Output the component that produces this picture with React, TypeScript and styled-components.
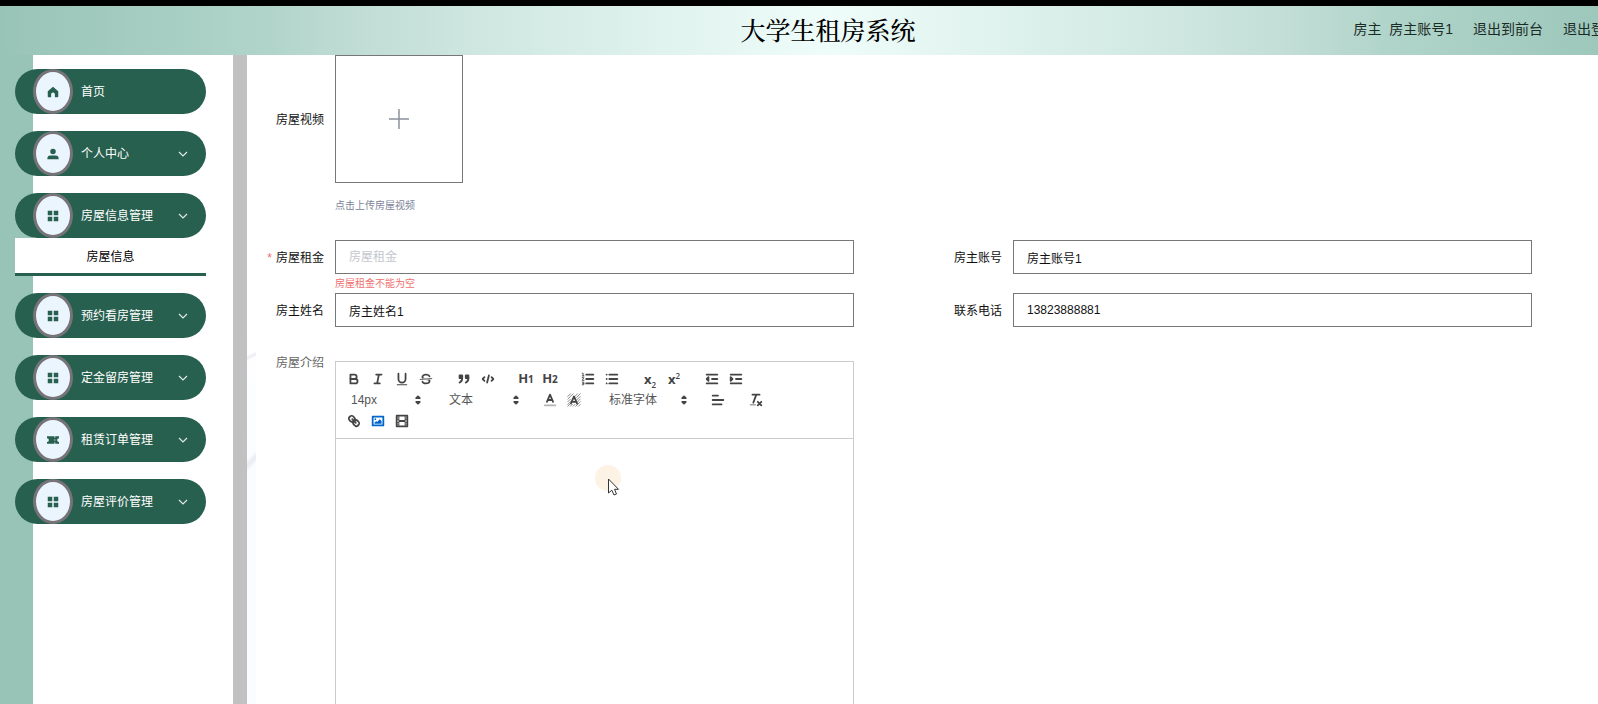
import React, { type ReactNode } from "react";
import styled, { createGlobalStyle } from "styled-components";

const green = "#28604f";
const mint = "#98c4b7";
const ink = "#444";

const GlobalStyle = createGlobalStyle`
  * { box-sizing: border-box; }
  html, body, #root { height: 100%; }
  body {
    margin: 0;
    overflow: hidden;
    background: #fff;
    color: #111;
    font: 12px/18px "Liberation Sans", "Noto Sans CJK SC", sans-serif;
  }
  button, input, select { font: inherit; color: inherit; }
  button { border: 0; padding: 0; background: none; cursor: pointer; }
`;

const Page = styled.div`
  display: flex;
  flex-direction: column;
  height: 100%;
  overflow: hidden;
  border-top: 6px solid #000;
`;

const Header = styled.header`
  flex: none;
  display: grid;
  grid-template-columns: 1fr auto 1fr;
  align-items: center;
  width: calc(100% + 58px);
  height: 49px;
  padding: 0 37px 3px;
  background: linear-gradient(90deg, ${mint} 0%, #b0d4c9 16%, #bfdcd4 21%, #cfe7e0 29%, #effdfa 50%, #cfe7e0 71%, #bfdcd4 79%, #b0d4c9 84%, ${mint} 100%);
`;

const Title = styled.h1`
  grid-column: 2;
  margin: 0;
  font: 500 25px/36px "Noto Serif CJK SC", "Noto Serif SC", "Liberation Serif", "Noto Sans CJK SC", serif;
  color: #000;
`;

const UserBar = styled.nav`
  display: flex;
  justify-content: flex-end;
  gap: 20px;
  font-size: 14px;
  line-height: 20px;
  color: #1b2b26;
  white-space: nowrap;

  a { color: inherit; text-decoration: none; }
`;

const Body = styled.div`
  flex: 1;
  display: flex;
  min-height: 0;
`;

const Sidebar = styled.aside`
  flex: none;
  width: 247px;
  padding: 14px 27px 0 15px;
  border-right: 14px solid #c1c1c1;
  background: linear-gradient(90deg, ${mint} 33px, #fff 33px);
`;

const Menu = styled.ul`
  display: flex;
  flex-direction: column;
  gap: 17px;
  margin: 0;
  padding: 0;
  list-style: none;
`;

const MenuButton = styled.button`
  display: flex;
  align-items: center;
  gap: 8px;
  width: 100%;
  height: 45px;
  padding: 0 18px;
  border-radius: 24px;
  background: ${green};
  color: #fff;
  text-align: left;
`;

const MenuText = styled.span`
  flex: 1;
`;

const IconDisc = styled.span`
  display: grid;
  place-items: center;
  width: 40px;
  height: 45px;
  border: 3px solid #777479;
  border-radius: 50%;
  background: #eaf5fe;
  color: ${green};
`;

const SubLink = styled.a`
  display: block;
  height: 38px;
  border-bottom: 3px solid ${green};
  background: #fff;
  color: #000;
  line-height: 38px;
  text-align: center;
  text-decoration: none;
`;

const Main = styled.main`
  flex: 1;
  min-width: 0;
  padding: 0 66px 0 9px;
  background:
    linear-gradient(155deg, transparent 35%, #ececf3 50%, transparent 65%) 0 293px / 9px 16px no-repeat,
    linear-gradient(135deg, transparent 30%, #e9ebf1 50%, transparent 70%) 0 394px / 9px 24px no-repeat,
    linear-gradient(#fff 270px, #fafcff 400px) 0 0 / 9px 100% no-repeat;
`;

const Form = styled.form`
  display: grid;
  grid-template-columns: 1fr 1fr;
  column-gap: 80px;
`;

const Field = styled.div<{ $wide?: boolean; $height: number }>`
  display: grid;
  grid-template-columns: 68px 1fr;
  column-gap: 11px;
  align-items: start;
  grid-column: ${(p) => (p.$wide ? "1 / -1" : "auto")};
  min-height: ${(p) => p.$height}px;
`;

const Label = styled.label<{ $line?: number; $muted?: boolean }>`
  line-height: ${(p) => p.$line ?? 36}px;
  color: ${(p) => (p.$muted ? "#666" : "#111")};
  text-align: right;
  white-space: nowrap;
`;

const Star = styled.span`
  margin-right: 4px;
  color: #f56c6c;
`;

const Input = styled.input`
  display: block;
  width: 100%;
  height: 34px;
  padding: 0 13px;
  border: 1px solid #777;
  border-radius: 0;
  background: #fff;
  outline: 0;

  &::placeholder { color: #c4c7cd; opacity: 1; }
`;

const Upload = styled.button`
  display: grid;
  place-items: center;
  width: 128px;
  height: 128px;
  border: 1px solid #777;
  color: #8c939d;
`;

const Note = styled.p<{ $error?: boolean }>`
  margin: ${(p) => (p.$error ? "1px 0 0" : "14px 0 0")};
  font-size: 10px;
  line-height: 18px;
  color: ${(p) => (p.$error ? "#f07070" : "#7d8499")};
`;

const Editor = styled.div`
  position: relative;
  height: 420px;
  border: 1px solid #ccc;
`;

const Toolbar = styled.div`
  display: flex;
  flex-wrap: wrap;
  column-gap: 14px;
  padding: 6px 8px 7px 6px;
  border-bottom: 1px solid #ccc;
  color: ${ink};
`;

const Group = styled.div`
  display: flex;
`;

const Tool = styled.button<{ $active?: boolean }>`
  display: grid;
  place-items: center;
  width: 24px;
  height: 21px;
  color: ${(p) => (p.$active ? "#06c" : ink)};
`;

const Glyph = styled.b`
  font: 700 13px/16px "Open Sans", "Liberation Sans", sans-serif;

  small { font-size: 10px; }
  sub, sup { font-size: 8px; font-weight: 600; line-height: 0; }
`;

const PickerBox = styled.span<{ $width: number }>`
  display: grid;
  grid-template-columns: 1fr 16px;
  align-items: center;
  width: ${(p) => p.$width}px;
  height: 21px;

  select {
    grid-area: 1 / 1 / 2 / 3;
    height: 21px;
    padding: 0 9px;
    border: 0;
    background: none;
    appearance: none;
    color: #555;
  }
  svg { grid-area: 1 / 2; pointer-events: none; }
`;

const Pointer = styled.div`
  position: absolute;
  left: 50%;
  top: 103px;
  width: 30px;
  height: 32px;
`;

const Svg = styled.svg`
  display: block;
  width: 16px;
  height: 16px;
  fill: none;
  stroke: currentColor;
  stroke-width: 2;
  stroke-linecap: round;
  stroke-linejoin: round;

  .fill { fill: currentColor; stroke: none; }
  .both { fill: currentColor; }
  .thin { stroke-width: 1; }
`;

const Q = ({ children }: { children: ReactNode }) => (
  <Svg viewBox="0 0 18 18" aria-hidden="true">{children}</Svg>
);

const icons = {
  bold: <Q><path d="M5,4H9.5a2.5,2.5,0,0,1,0,5H5Z" /><path d="M5,9h5.5a2.5,2.5,0,0,1,0,5H5Z" /></Q>,
  italic: <Q><path d="M7,4H13M5,14H11M8,14L10,4" /></Q>,
  underline: <Q><path d="M5,3V9a4,4,0,0,0,8,0V3" /><rect className="fill" x="3" y="15" width="12" height="1" rx=".5" /></Q>,
  strike: (
    <Q>
      <path className="thin" d="M15.5,8.5L2.5,9.5" />
      <path className="fill" d="M9.007,8C6.542,7.791,6,7.519,6,6.5,6,5.792,7.283,5,9,5c1.571,0,2.765.679,2.969,1.309a1,1,0,0,0,1.9-.617C13.356,4.106,11.354,3,9,3,6.2,3,4,4.538,4,6.5a3.2,3.2,0,0,0,.5,1.843Z" />
      <path className="fill" d="M8.984,10C11.457,10.208,12,10.479,12,11.5c0,.708-1.283,1.5-3,1.5-1.571,0-2.765-.679-2.969-1.309a1,1,0,1,0-1.9.617C4.644,13.894,6.646,15,9,15c2.8,0,5-1.538,5-3.5a3.2,3.2,0,0,0-.5-1.843Z" />
    </Q>
  ),
  quote: (
    <Q>
      <rect className="both" x="4" y="5" width="3" height="3" /><rect className="both" x="11" y="5" width="3" height="3" />
      <path className="both" d="M7,8c0,4.031-3,5-3,5" /><path className="both" d="M14,8c0,4.031-3,5-3,5" />
    </Q>
  ),
  code: <Q><path d="M5,7L3,9L5,11M13,7L15,9L13,11M10,5L8,13" /></Q>,
  ordered: (
    <Q>
      <path d="M7,4H15M7,9H15M7,14H15" />
      <path className="thin" d="M2.5,2.5H3.5V5.5M2.5,5.5H4.5M2.5,7.5H4.3L2.5,10.5H4.5M2.5,12.5H4.3V15.5H2.5M3,14H4.3" />
    </Q>
  ),
  bullet: <Q><path d="M6,4H15M6,9H15M6,14H15M3,4V4.01M3,9V9.01M3,14V14.01" /></Q>,
  outdent: <Q><path d="M3,4H15M3,14H15M9,9H15" /><path className="both" d="M5,7V11L3,9Z" /></Q>,
  indent: <Q><path d="M3,4H15M3,14H15M9,9H15" /><path className="both" d="M3,7V11L5,9Z" /></Q>,
  color: <Q><path d="M5.5,11L9,3L12.5,11M6.4,9H11.6" /><path d="M3,15H15" opacity=".4" /></Q>,
  background: (
    <Q>
      <path className="thin" d="M2,5L5,2M2,8L8,2M2,11L5,8M2,14L6,10M2,16L4,14M5,16L7,14M8,16L10,14M11,16L16,11M14,16L16,14M12,12L16,8M12,9L16,5M10,5L13,2M12,6L16,2" opacity=".7" />
      <path d="M5.5,13L9,5L12.5,13M6.4,11H11.6" />
    </Q>
  ),
  align: <Q><path d="M3,9H15M3,14H13M3,4H9" /></Q>,
  clean: <Q><path d="M5,3H13M6,12L9.35,3M11,11L15,15M15,11L11,15" /><rect className="fill" x="2" y="14" width="7" height="1" rx=".5" /></Q>,
  link: (
    <Q>
      <path d="M7,7L11,11" />
      <path d="M8.9,4.577a3.476,3.476,0,0,1,.36,4.679A3.476,3.476,0,0,1,4.577,8.9C3.185,7.5,2.035,6.4,4.217,4.217S7.5,3.185,8.9,4.577Z" />
      <path d="M13.423,9.1a3.476,3.476,0,0,0-4.679-.36,3.476,3.476,0,0,0,.36,4.679c1.392,1.392,2.5,2.542,4.679.36S14.815,10.5,13.423,9.1Z" />
    </Q>
  ),
  image: (
    <Q>
      <rect x="3" y="4" width="12" height="10" /><circle className="fill" cx="6" cy="7" r="1" />
      <path className="fill" d="M5,12V11L7,9L8,10L11,7L13,9V12Z" />
    </Q>
  ),
  video: (
    <Q>
      <rect x="3" y="3" width="12" height="12" />
      <path className="fill" d="M5,3h1v12h-1zM12,3h1v12h-1zM5,8h8v2h-8zM3,5h3v1h-3zM3,7h3v1h-3zM3,10h3v1h-3zM3,12h3v1h-3zM12,5h3v1h-3zM12,7h3v1h-3zM12,10h3v1h-3zM12,12h3v1h-3z" />
    </Q>
  ),
  arrows: <Q><path className="both" d="M7,11L9,13L11,11ZM7,7L9,5L11,7Z" /></Q>,
};

const MenuIcon = styled.svg`
  width: 12px;
  height: 12px;
  fill: currentColor;
`;

const menuShapes = {
  home: "M8 1L15 7V14a1 1 0 0 1-1 1H10.5V11a2.5 2.5 0 0 0-5 0V15H2a1 1 0 0 1-1-1V7Z",
  user: "M8 1a3.7 3.7 0 1 1 0 7.4a3.7 3.7 0 0 1 0-7.4ZM4.5 10h7a4 4 0 0 1 4 4V15H.5V14A4 4 0 0 1 4.500 10Z",
  grid: "M1 1h6v6H1ZM9 1h6v6H9ZM1 9h6v6H1ZM9 9h6v6H9Z",
  ticket: "M0 3H10V5H11V3H16V5.5A2.5 2.5 0 0 0 16 10.5V13H11V11H10V13H0V10.5A2.5 2.5 0 0 0 0 5.5ZM10 7V9H11V7Z",
};

const Chevron = () => (
  <svg width="10" height="10" viewBox="0 0 10 10" fill="none" stroke="#dfeae6" strokeWidth="1.2" aria-hidden="true">
    <path d="M1 3L5 7L9 3" />
  </svg>
);

type Entry = { text: string; icon: keyof typeof menuShapes; leaf?: boolean; child?: string };

const entries: Entry[] = [
  { text: "首页", icon: "home", leaf: true },
  { text: "个人中心", icon: "user" },
  { text: "房屋信息管理", icon: "grid", child: "房屋信息" },
  { text: "预约看房管理", icon: "grid" },
  { text: "定金留房管理", icon: "grid" },
  { text: "租赁订单管理", icon: "ticket" },
  { text: "房屋评价管理", icon: "grid" },
];

const MenuItem = ({ text, icon, leaf, child }: Entry) => (
  <li>
    <MenuButton type="button">
      <IconDisc><MenuIcon viewBox="0 0 16 16" aria-hidden="true"><path fillRule="evenodd" d={menuShapes[icon]} /></MenuIcon></IconDisc>
      <MenuText>{text}</MenuText>
      {!leaf && <Chevron />}
    </MenuButton>
    {child && <SubLink href="#house">{child}</SubLink>}
  </li>
);

const ToolButton = ({ name, label, active }: { name: keyof typeof icons; label: string; active?: boolean }) => (
  <Tool type="button" aria-label={label} $active={active}>{icons[name]}</Tool>
);

const Picker = ({ value, label, width }: { value: string; label: string; width: number }) => (
  <PickerBox $width={width}>
    <select aria-label={label}><option>{value}</option></select>
    {icons.arrows}
  </PickerBox>
);

export default function App() {
  return (
    <Page>
      <GlobalStyle />
      <Header>
        <Title>大学生租房系统</Title>
        <UserBar>
          <span>房主&nbsp; 房主账号1</span>
          <a href="#front">退出到前台</a>
          <a href="#logout">退出登录</a>
        </UserBar>
      </Header>
      <Body>
        <Sidebar>
          <Menu>{entries.map((e) => <MenuItem key={e.text} {...e} />)}</Menu>
        </Sidebar>
        <Main>
          <Form>
            <Field $wide $height={185}>
              <Label htmlFor="video" $line={130}>房屋视频</Label>
              <div>
                <Upload id="video" type="button" aria-label="房屋视频">
                  <svg width="20" height="20" viewBox="0 0 20 20" stroke="currentColor" strokeWidth="1.5"><path d="M0 10H20M10 0V20" /></svg>
                </Upload>
                <Note>点击上传房屋视频</Note>
              </div>
            </Field>
            <Field $height={53}>
              <Label htmlFor="rent"><Star>*</Star>房屋租金</Label>
              <div>
                <Input id="rent" placeholder="房屋租金" />
                <Note $error>房屋租金不能为空</Note>
              </div>
            </Field>
            <Field $height={53}>
              <Label htmlFor="account">房主账号</Label>
              <Input id="account" defaultValue="房主账号1" />
            </Field>
            <Field $height={68}>
              <Label htmlFor="name">房主姓名</Label>
              <Input id="name" defaultValue="房主姓名1" />
            </Field>
            <Field $height={68}>
              <Label htmlFor="phone">联系电话</Label>
              <Input id="phone" defaultValue="13823888881" />
            </Field>
            <Field $height={420}>
              <Label as="span" $line={4} $muted>房屋介绍</Label>
              <Editor>
                <Toolbar>
                  <Group>
                    <ToolButton name="bold" label="加粗" />
                    <ToolButton name="italic" label="斜体" />
                    <ToolButton name="underline" label="下划线" />
                    <ToolButton name="strike" label="删除线" />
                  </Group>
                  <Group>
                    <ToolButton name="quote" label="引用" />
                    <ToolButton name="code" label="代码" />
                  </Group>
                  <Group>
                    <Tool type="button"><Glyph>H<small>1</small></Glyph></Tool>
                    <Tool type="button"><Glyph>H<small>2</small></Glyph></Tool>
                  </Group>
                  <Group>
                    <ToolButton name="ordered" label="有序列表" />
                    <ToolButton name="bullet" label="无序列表" />
                  </Group>
                  <Group>
                    <Tool type="button"><Glyph>x<sub>2</sub></Glyph></Tool>
                    <Tool type="button"><Glyph>x<sup>2</sup></Glyph></Tool>
                  </Group>
                  <Group>
                    <ToolButton name="outdent" label="减少缩进" />
                    <ToolButton name="indent" label="增加缩进" />
                  </Group>
                  <Picker value="14px" label="字号" width={84} />
                  <Picker value="文本" label="标题" width={84} />
                  <Group>
                    <ToolButton name="color" label="文字颜色" />
                    <ToolButton name="background" label="背景颜色" />
                  </Group>
                  <Picker value="标准字体" label="字体" width={92} />
                  <Group><ToolButton name="align" label="对齐" /></Group>
                  <Group><ToolButton name="clean" label="清除格式" /></Group>
                  <Group>
                    <ToolButton name="link" label="链接" />
                    <ToolButton name="image" label="图片" active />
                    <ToolButton name="video" label="视频" />
                  </Group>
                </Toolbar>
                <Pointer>
                  <svg width="30" height="32" viewBox="0 0 30 32" aria-hidden="true">
                    <circle cx="13" cy="13" r="13" fill="#fdf3e4" />
                    <path d="M13.5 14V28L16.8 25.2L19 30L21.5 29L19.5 24.3H23.5Z" fill="#fff" stroke="#333" />
                  </svg>
                </Pointer>
              </Editor>
            </Field>
          </Form>
        </Main>
      </Body>
    </Page>
  );
}
